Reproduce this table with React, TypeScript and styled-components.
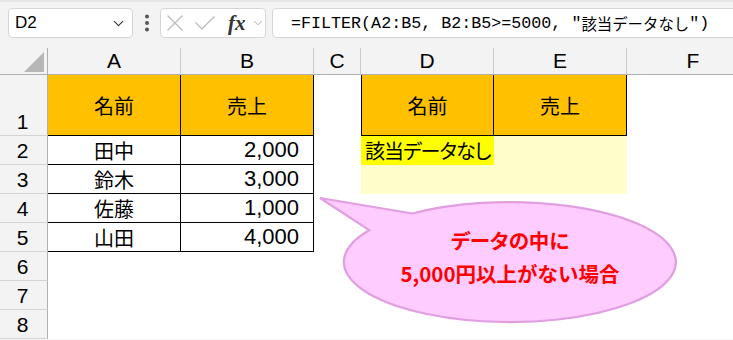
import React from "react";
import styled, { createGlobalStyle } from "styled-components";
import { ChevronDown, EllipsisVertical } from "lucide-react";

const CJK = `"Noto Sans CJK JP", sans-serif`;
const LATIN = `"Liberation Sans", "Noto Sans CJK JP", sans-serif`;

type Align = "left" | "center" | "right";

type CellDef = {
  text?: string;
  num?: boolean;
  fill?: string;
  border?: boolean;
  left?: boolean;
  align?: Align;
  tight?: boolean;
};

const ORANGE = "#ffc000";
const YELLOW = "#ffff00";
const PALE = "#ffffcc";

const head = (text: string, left = false): CellDef => ({
  text,
  fill: ORANGE,
  border: true,
  left,
  align: "center",
});
const name = (text: string): CellDef => ({ text, border: true, align: "center" });
const amount = (text: string): CellDef => ({ text, num: true, border: true, align: "right" });
const pale: CellDef = { fill: PALE };
const empty: CellDef = {};

const columns = ["A", "B", "C", "D", "E", "F"];

const rows: CellDef[][] = [
  [head("名前"), head("売上"), empty, head("名前", true), head("売上"), empty],
  [
    name("田中"),
    amount("2,000"),
    empty,
    { text: "該当データなし", fill: YELLOW, align: "left", tight: true },
    pale,
    empty,
  ],
  [name("鈴木"), amount("3,000"), empty, pale, pale, empty],
  [name("佐藤"), amount("1,000"), empty, empty, empty, empty],
  [name("山田"), amount("4,000"), empty, empty, empty, empty],
  [empty, empty, empty, empty, empty, empty],
  [empty, empty, empty, empty, empty, empty],
  [empty, empty, empty, empty, empty, empty],
];

const GlobalStyle = createGlobalStyle`
  html, body {
    margin: 0;
    padding: 0;
    background: #ffffff;
  }
`;

const Page = styled.div`
  position: relative;
  width: 733px;
  height: 340px;
  overflow: hidden;
  background: #f3f3f3;
`;

const FormulaBar = styled.div`
  display: flex;
  align-items: flex-start;
  height: 48px;
  box-sizing: border-box;
  padding: 6px 0 0 8px;
  border-top: 2px solid #e6e6e6;
`;

const Field = styled.div`
  display: flex;
  align-items: center;
  height: 30px;
  box-sizing: border-box;
  background: #ffffff;
  border: 1px solid #d6d6d6;
  border-radius: 4px;
`;

const NameBox = styled(Field)`
  width: 125px;
  justify-content: space-between;
  padding: 0 5px 0 6px;
  font-family: ${LATIN};
  font-size: 17px;
  color: #000;
`;

const Grip = styled.div`
  width: 27px;
  height: 30px;
  display: flex;
  align-items: center;
  justify-content: center;
  color: #555;
`;

const FxBox = styled(Field)`
  width: 106px;
  padding: 0 0 0 6px;
  color: #b9b9b9;
`;

const ToolIcon = styled.svg<{ $gap: number }>`
  flex: none;
  margin-right: ${({ $gap }) => $gap}px;
`;

const Fx = styled.span`
  font-family: "Liberation Serif", serif;
  font-style: italic;
  font-weight: bold;
  font-size: 21px;
  color: #333;
  line-height: 1;
  margin-right: 5px;
`;

const FormulaInput = styled(Field)`
  flex: 1;
  margin-left: 6px;
  margin-right: -6px;
  padding-left: 18px;
  font-family: "Liberation Mono", "Noto Sans CJK JP", monospace;
  font-size: 16.7px;
  color: #000;
  white-space: nowrap;
`;

const FormulaKana = styled.span`
  font-family: ${CJK};
  font-size: 15.4px;
`;

const Sheet = styled.div`
  display: grid;
  grid-template-columns: 48px 133px 133px 47px 133px 133px 133px;
  grid-template-rows: 27px 61px repeat(7, 29px);
  background: #ffffff;
`;

const Corner = styled.div`
  position: relative;
  background: #f3f3f3;
  border-right: 1px solid #b0b0b0;
  border-bottom: 1px solid #b0b0b0;
  box-sizing: border-box;
`;

const CornerMark = styled.div`
  position: absolute;
  right: 3px;
  bottom: 2px;
  width: 20px;
  height: 20px;
  background: #b7b7b7;
  clip-path: polygon(100% 0, 100% 100%, 0 100%);
`;

const ColHeader = styled.div`
  display: flex;
  align-items: center;
  justify-content: center;
  background: #f3f3f3;
  border-right: 1px solid #cacaca;
  border-bottom: 1px solid #b0b0b0;
  box-sizing: border-box;
  font-family: ${LATIN};
  font-size: 21px;
  color: #000;
`;

const RowHeader = styled.div`
  display: flex;
  align-items: flex-end;
  justify-content: center;
  background: #f3f3f3;
  border-right: 1px solid #b0b0b0;
  border-bottom: 1px solid #d4d4d4;
  box-sizing: border-box;
  font-family: ${LATIN};
  font-size: 21px;
  line-height: 27px;
  color: #000;
  padding-right: 2px;
`;

const justify: Record<Align, string> = {
  left: "flex-start",
  center: "center",
  right: "flex-end",
};

const Cell = styled.div<{
  $fill?: string;
  $border?: boolean;
  $left?: boolean;
  $align: Align;
  $tight?: boolean;
}>`
  display: flex;
  align-items: center;
  justify-content: ${({ $align }) => justify[$align]};
  box-sizing: border-box;
  padding: ${({ $align }) =>
    $align === "right" ? "0 14px 0 0" : $align === "left" ? "0 0 0 4px" : "0"};
  background: ${({ $fill }) => $fill ?? "#ffffff"};
  border-right: ${({ $border }) => ($border ? "1px solid #000" : "none")};
  border-bottom: ${({ $border }) => ($border ? "1px solid #000" : "none")};
  border-left: ${({ $left }) => ($left ? "1px solid #000" : "none")};
  font-family: ${CJK};
  font-size: 20px;
  color: #000;
  white-space: nowrap;
  font-feature-settings: ${({ $tight }) => ($tight ? '"palt"' : "normal")};
  letter-spacing: ${({ $tight }) => ($tight ? "-1px" : "normal")};
`;

const Num = styled.span`
  font-family: ${LATIN};
  font-size: 22px;
`;

const Callout = styled.div`
  position: absolute;
  left: 318px;
  top: 194px;
  width: 364px;
  height: 134px;
`;

const Bubble = styled.svg`
  position: absolute;
  left: 0;
  top: 0;
  overflow: visible;
`;

const CalloutText = styled.div`
  position: absolute;
  left: 26px;
  top: 30px;
  width: 332px;
  text-align: center;
  font-family: ${CJK};
  font-weight: bold;
  font-size: 20.5px;
  line-height: 33px;
  color: #ff0000;
`;

const CalloutLine = styled.div<{ $tight?: boolean }>`
  font-feature-settings: ${({ $tight }) => ($tight ? '"palt"' : "normal")};
`;

export default function App() {
  return (
    <>
      <GlobalStyle />
      <Page>
        <FormulaBar>
          <NameBox>
            <span>D2</span>
            <ChevronDown size={17} strokeWidth={1.6} color="#333" />
          </NameBox>
          <Grip>
            <EllipsisVertical size={22} strokeWidth={2.4} />
          </Grip>
          <FxBox>
            <ToolIcon $gap={12} width="16" height="16" viewBox="0 0 16 16">
              <path d="M0.5 0.5 L15.5 15.5 M15.5 0.5 L0.5 15.5" stroke="currentColor" strokeWidth="1.2" fill="none" />
            </ToolIcon>
            <ToolIcon $gap={13} width="20" height="14" viewBox="0 0 20 14">
              <path d="M0.5 6.5 L6.8 13 L19.5 0.5" stroke="currentColor" strokeWidth="1.2" fill="none" />
            </ToolIcon>
            <Fx>fx</Fx>
            <ChevronDown size={14} strokeWidth={1.4} color="#999" />
          </FxBox>
          <FormulaInput>
            =FILTER(A2:B5, B2:B5&gt;=5000, "<FormulaKana>該当データなし</FormulaKana>")
          </FormulaInput>
        </FormulaBar>

        <Sheet>
          <Corner>
            <CornerMark />
          </Corner>
          {columns.map((c) => (
            <ColHeader key={c}>{c}</ColHeader>
          ))}
          {rows.map((row, r) => (
            <React.Fragment key={r}>
              <RowHeader>{r + 1}</RowHeader>
              {row.map((cell, c) => (
                <Cell
                  key={c}
                  $fill={cell.fill}
                  $border={cell.border}
                  $left={cell.left}
                  $align={cell.align ?? "left"}
                  $tight={cell.tight}
                >
                  {cell.num ? <Num>{cell.text}</Num> : cell.text}
                </Cell>
              ))}
            </React.Fragment>
          ))}
        </Sheet>

        <Callout>
          <Bubble width="364" height="134" viewBox="0 0 364 134">
            <path
              d="M94.4 19.5 L2 4 L51.2 36.2 A166 60 0 1 0 94.4 19.5 Z"
              fill="#ffccff"
              stroke="#e19ee1"
              strokeWidth="2.2"
              strokeLinejoin="miter"
            />
          </Bubble>
          <CalloutText>
            <CalloutLine $tight>データの中に</CalloutLine>
            <CalloutLine>5,000円以上がない場合</CalloutLine>
          </CalloutText>
        </Callout>
      </Page>
    </>
  );
}
